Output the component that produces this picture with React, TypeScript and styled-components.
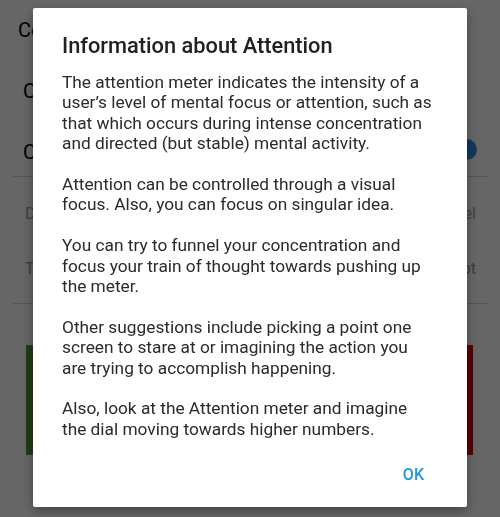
import React from "react";
import styled, { createGlobalStyle } from "styled-components";

const Global = createGlobalStyle`
  html, body { margin: 0; padding: 0; background: #ffffff; }
  body { font-family: Roboto, "Noto Sans", sans-serif; }
`;

const Page = styled.div`
  width: 500px;
  height: 517px;
  overflow: hidden;
  background: #ffffff;
  display: flex;
  flex-direction: column;
`;

const Header = styled.div`
  height: 60px;
  display: flex;
  align-items: center;
  padding-left: 18px;
  font-size: 20px;
  color: #000;
`;

const Row = styled.div<{ $h: number; $pt?: number }>`
  height: ${(p) => p.$h}px;
  box-sizing: border-box;
  padding: ${(p) => p.$pt ?? 0}px 23px 0 23px;
  display: flex;
  align-items: center;
  justify-content: space-between;
  font-size: 20px;
  color: #000;
`;

const Thumb = styled.div`
  width: 21px;
  height: 21px;
  border-radius: 50%;
  background: #2a8ee6;
  margin-top: -4px;
`;

const Divider = styled.div`
  height: 1px;
  margin: 0 12px;
  background: #d6d6d6;
`;

const SubList = styled.div<{ $mt: number; $mb: number }>`
  margin: ${(p) => p.$mt}px 0 ${(p) => p.$mb}px;
  display: flex;
  flex-direction: column;
`;

const SubRow = styled.div`
  height: 55px;
  display: flex;
  align-items: center;
  justify-content: space-between;
  padding: 0 24px 0 25px;
  font-size: 16px;
  color: #9a9a9a;
`;

const Meter = styled.div`
  margin: 41px 27px 0 26px;
  height: 110px;
  display: flex;
  justify-content: space-between;
`;

const Bar = styled.div<{ $color: string }>`
  width: 8px;
  background: ${(p) => p.$color};
`;

const Scrim = styled.div`
  position: fixed;
  inset: 0;
  background: rgba(0, 0, 0, 0.6);
  display: flex;
  justify-content: center;
  align-items: flex-start;
  padding-top: 8px;
`;

const Dialog = styled.div`
  width: 434px;
  height: 499px;
  box-sizing: border-box;
  background: #ffffff;
  border-radius: 2px;
  box-shadow: 0 4px 12px rgba(0, 0, 0, 0.35);
  padding: 26px 29px 0 29px;
  display: flex;
  flex-direction: column;
`;

const Title = styled.h2`
  margin: 0;
  font-family: Roboto, "Noto Sans", sans-serif;
  font-weight: 500;
  font-size: 21.8px;
  line-height: 24px;
  color: #212121;
`;

const Body = styled.div`
  margin-top: 14px;
  display: flex;
  flex-direction: column;
  gap: 20.4px;
`;

const Para = styled.p`
  margin: 0;
  font-size: 17.3px;
  line-height: 20.4px;
  color: #2b2b2b;
  white-space: nowrap;
`;

const Actions = styled.div`
  margin-top: auto;
  height: 66px;
  display: flex;
  justify-content: flex-end;
  align-items: center;
  padding-right: 14px;
`;

const OkButton = styled.button`
  border: none;
  background: transparent;
  font-family: Roboto, "Noto Sans", sans-serif;
  font-weight: 500;
  font-size: 16px;
  color: #2196e0;
  padding: 0;
  cursor: pointer;
`;

const paragraphs: string[][] = [
  [
    "The attention meter indicates the intensity of a",
    "user\u2019s level of mental focus or attention, such as",
    "that which occurs during intense concentration",
    "and directed (but stable) mental activity.",
  ],
  [
    "Attention can be controlled through a visual",
    "focus. Also, you can focus on singular idea.",
  ],
  [
    "You can try to funnel your concentration and",
    "focus your train of thought towards pushing up",
    "the meter.",
  ],
  [
    "Other suggestions include picking a point one",
    "screen to stare at or imagining the action you",
    "are trying to accomplish happening.",
  ],
  [
    "Also, look at the Attention meter and imagine",
    "the dial moving towards higher numbers.",
  ],
];

export default function App() {
  return (
    <>
      <Global />
      <Page>
        <Header>Connection</Header>
        <Row $h={61}>Connect</Row>
        <Row $h={55} $pt={6}>
          Calibration
          <Thumb />
        </Row>
        <Divider />
        <SubList $mt={9} $mb={7}>
          <SubRow>
            <span>Device</span>
            <span>Level</span>
          </SubRow>
          <SubRow>
            <span>Timer</span>
            <span>Accept</span>
          </SubRow>
        </SubList>
        <Divider />
        <Meter>
          <Bar $color="#4f9a2a" />
          <Bar $color="#d10a0a" />
        </Meter>
      </Page>
      <Scrim>
        <Dialog>
          <Title>Information about Attention</Title>
          <Body>
            {paragraphs.map((lines, i) => (
              <Para key={i}>
                {lines.map((l, j) => (
                  <React.Fragment key={j}>
                    {l}
                    {j < lines.length - 1 && <br />}
                  </React.Fragment>
                ))}
              </Para>
            ))}
          </Body>
          <Actions>
            <OkButton>OK</OkButton>
          </Actions>
        </Dialog>
      </Scrim>
    </>
  );
}
